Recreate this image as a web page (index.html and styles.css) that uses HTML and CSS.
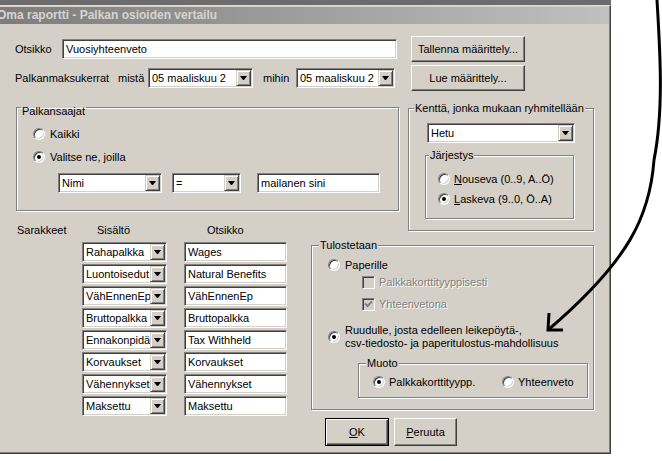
FILE: index.html
```html
<!DOCTYPE html>
<html lang="fi">
<head>
<meta charset="utf-8">
<title>Oma raportti - Palkan osioiden vertailu</title>
<link rel="stylesheet" href="styles.css">
</head>
<body>
<div class="screen">
  <div class="topstrip"></div>
  <div class="window">
    <div class="titlebar">Oma raportti - Palkan osioiden vertailu</div>
    <div class="client">
      <div class="top">
        <div class="field-row">
          <span class="lbl lbl-otsikko">Otsikko</span>
          <div class="input w-otsikko">Vuosiyhteenveto</div>
        </div>
        <div class="btn">Tallenna määrittely...</div>
        <div class="field-row">
          <span class="lbl lbl-kerrat">Palkanmaksukerrat</span>
          <span class="lbl lbl-mista">mistä</span>
          <div class="select w-date1"><span class="val">05 maaliskuu 2</span><span class="arrow"></span></div>
          <span class="lbl lbl-mihin">mihin</span>
          <div class="select w-date2"><span class="val">05 maaliskuu 2</span><span class="arrow"></span></div>
        </div>
        <div class="btn">Lue määrittely...</div>
      </div>

      <div class="mid">
        <fieldset class="group g-saajat">
          <legend>Palkansaajat</legend>
          <div class="opt"><span class="radio"></span><span>Kaikki</span></div>
          <div class="opt opt-valitse"><span class="radio on"></span><span>Valitse ne, joilla</span></div>
          <div class="filter">
            <div class="select w-nimi"><span class="val">Nimi</span><span class="arrow"></span></div>
            <div class="select w-eq"><span class="val">=</span><span class="arrow"></span></div>
            <div class="input w-haku">mailanen sini</div>
          </div>
        </fieldset>
        <fieldset class="group g-kentta">
          <legend>Kenttä, jonka mukaan ryhmitellään</legend>
          <div class="select w-hetu"><span class="val">Hetu</span><span class="arrow"></span></div>
          <fieldset class="group g-jarj">
            <legend>Järjestys</legend>
            <div class="opt opt-narrow"><span class="radio"></span><span><u>N</u>ouseva (0..9, A..Ö)</span></div>
            <div class="opt opt-narrow opt-laskeva"><span class="radio on"></span><span><u>L</u>askeva (9..0, Ö..A)</span></div>
          </fieldset>
        </fieldset>
      </div>

      <div class="bottom">
        <div class="columns">
          <div class="col-head c1">Sarakkeet</div>
          <div class="col-head c2 h-sis">Sisältö</div>
          <div class="col-head c3 h-ots">Otsikko</div>

          <div class="select c2"><span class="val">Rahapalkka</span><span class="arrow"></span></div>
          <div class="input c3">Wages</div>
          <div class="select c2"><span class="val">Luontoisedut</span><span class="arrow"></span></div>
          <div class="input c3">Natural Benefits</div>
          <div class="select c2"><span class="val">VähEnnenEp</span><span class="arrow"></span></div>
          <div class="input c3">VähEnnenEp</div>
          <div class="select c2"><span class="val">Bruttopalkka</span><span class="arrow"></span></div>
          <div class="input c3">Bruttopalkka</div>
          <div class="select c2"><span class="val">Ennakonpidä</span><span class="arrow"></span></div>
          <div class="input c3">Tax Withheld</div>
          <div class="select c2"><span class="val">Korvaukset</span><span class="arrow"></span></div>
          <div class="input c3">Korvaukset</div>
          <div class="select c2"><span class="val">Vähennykset</span><span class="arrow"></span></div>
          <div class="input c3">Vähennykset</div>
          <div class="select c2"><span class="val">Maksettu</span><span class="arrow"></span></div>
          <div class="input c3">Maksettu</div>
        </div>

        <div class="output">
          <fieldset class="group g-tulos">
            <legend>Tulostetaan</legend>
            <div class="opt"><span class="radio"></span><span>Paperille</span></div>
            <div class="chk-row chk-1"><span class="check"></span><span class="disabled">Palkkakorttityyppisesti</span></div>
            <div class="chk-row chk-2"><span class="check"><svg class="tick" width="11" height="11" viewBox="0 0 11 11"><path d="M2 4.5 L4.5 7 L9 2.5" fill="none" stroke="#808080" stroke-width="2"/></svg></span><span class="disabled">Yhteenvetona</span></div>
            <div class="opt opt-ruutu"><span class="radio on"></span><span>Ruudulle, josta edelleen leikepöytä-,<br>csv-tiedosto- ja paperitulostus-mahdollisuus</span></div>
            <fieldset class="group g-muoto">
              <legend>Muoto</legend>
              <div class="muoto-row">
                <div class="opt opt-narrow o-palkka"><span class="radio on"></span><span>Palkkakorttityypp.</span></div>
                <div class="opt opt-narrow"><span class="radio"></span><span>Yhteenveto</span></div>
              </div>
            </fieldset>
          </fieldset>
          <div class="actions">
            <div class="btn btn-ok"><span><u>O</u>K</span></div>
            <div class="btn btn-cancel"><span><u>P</u>eruuta</span></div>
          </div>
        </div>
      </div>
    </div>
  </div>

  <svg class="annotation" width="662" height="461" viewBox="0 0 662 461">
    <path d="M657,0 C660,50 664,110 654,160 C650,215 630,260 548,330" fill="none" stroke="#000" stroke-width="3"/>
    <path d="M549,313 L548,330 L563,330" fill="none" stroke="#000" stroke-width="3"/>
  </svg>
</div>
</body>
</html>
```

FILE: styles.css
```css
* { box-sizing: border-box; }

html, body {
  margin: 0;
  padding: 0;
  background: #fff;
}

body {
  font-family: "Liberation Sans", Arial, sans-serif;
  font-size: 11px;
  line-height: 13px;
  color: #000;
}

.screen {
  position: relative;
  width: 662px;
  height: 461px;
  overflow: hidden;
  background: #fff;
}

.topstrip {
  width: 611px;
  height: 5px;
  background: #6c6c6c;
}

.window {
  width: 611px;
  height: 449px;
  background: #d4d0c8;
  border-top: 1px solid #dedbd5;
  border-right: 1px solid #404040;
  border-bottom: 1px solid #404040;
  box-shadow: inset -1px -1px #808080;
  padding: 1px 1px 1px 0;
  display: flex;
  flex-direction: column;
}

.titlebar {
  height: 17px;
  background: linear-gradient(to right, #7c7c7c, #c0c0c0);
  color: #d8d5cf;
  font-weight: bold;
  font-size: 12px;
  line-height: 17px;
  text-indent: -3px;
  white-space: nowrap;
  overflow: hidden;
}

.client {
  flex: 1;
  padding: 12px 0 0 15px;
}

/* ---------- generic controls ---------- */

.lbl { white-space: nowrap; }

.input {
  height: 20px;
  background: #fff;
  border: 1px solid;
  border-color: #808080 #fff #fff #808080;
  box-shadow: inset 1px 1px #404040, inset -1px -1px #d4d0c8;
  padding: 0 3px;
  line-height: 18px;
  white-space: nowrap;
  overflow: hidden;
}

.select {
  height: 20px;
  display: flex;
  background: #fff;
  border: 1px solid;
  border-color: #808080 #fff #fff #808080;
  box-shadow: inset 1px 1px #404040, inset -1px -1px #d4d0c8;
  padding: 1px;
}

.select .val {
  flex: 1;
  min-width: 0;
  padding-left: 2px;
  line-height: 16px;
  white-space: nowrap;
  overflow: hidden;
}

.select .arrow {
  flex: none;
  width: 15px;
  height: 16px;
  background: #d4d0c8;
  border: 1px solid;
  border-color: #d4d0c8 #404040 #404040 #d4d0c8;
  box-shadow: inset 1px 1px #fff, inset -1px -1px #808080;
  display: flex;
  align-items: center;
  justify-content: center;
}

.select .arrow::after {
  content: "";
  width: 1px;
  height: 0;
  border-top: 4px solid #000;
  border-left: 3px solid transparent;
  border-right: 3px solid transparent;
  box-sizing: content-box;
}

.btn {
  height: 26px;
  background: #d4d0c8;
  border: 1px solid;
  border-color: #fff #404040 #404040 #fff;
  box-shadow: inset -1px -1px #808080;
  display: flex;
  align-items: center;
  justify-content: center;
  white-space: nowrap;
}

.btn-ok {
  border: 1px solid #000;
  box-shadow: inset 1px 1px #fff, inset -1px -1px #404040, inset -2px -2px #808080;
}

.opt {
  display: flex;
  align-items: center;
  height: 16px;
  gap: 5px;
  white-space: nowrap;
}

.opt-narrow { gap: 4px; }

.radio {
  position: relative;
  flex: none;
  width: 12px;
  height: 12px;
  border-radius: 50%;
  background: #fff;
  border: 1px solid;
  border-color: #808080 #fff #fff #808080;
  box-shadow: inset 1px 1px #404040, inset -1px -1px #d4d0c8;
}

.radio.on::after {
  content: "";
  position: absolute;
  left: 3px;
  top: 3px;
  width: 4px;
  height: 4px;
  border-radius: 50%;
  background: #000;
}

.check {
  flex: none;
  width: 13px;
  height: 13px;
  background: #d4d0c8;
  border: 1px solid;
  border-color: #808080 #fff #fff #808080;
  box-shadow: inset 1px 1px #404040, inset -1px -1px #d4d0c8;
  display: flex;
}

.tick { display: block; }

.disabled {
  color: #808080;
  text-shadow: 1px 1px 0 #fff;
}

.group {
  margin: 0;
  min-width: 0;
  border: 1px solid #808080;
  box-shadow: inset 1px 1px #fff, 1px 1px #fff;
}

.group > legend {
  padding: 0 1px;
  height: 13px;
  line-height: 13px;
  background: #d4d0c8;
  white-space: nowrap;
}

/* ---------- top rows ---------- */

.top {
  display: grid;
  grid-template-columns: 396px 114px;
  grid-auto-rows: 26px;
  row-gap: 3px;
}

.field-row {
  display: flex;
  align-items: center;
}

.lbl-otsikko { width: 47px; }
.w-otsikko { width: 335px; }
.lbl-kerrat { width: 103px; }
.lbl-mista { width: 30px; }
.w-date1 { width: 105px; }
.lbl-mihin { width: 33px; margin-left: 10px; }
.w-date2 { width: 99px; }

/* ---------- middle groups ---------- */

.mid {
  display: flex;
  align-items: flex-start;
  margin-top: 6px;
}

.g-saajat {
  width: 383px;
  margin-left: 1px;
  padding: 8px 0 17px 16px;
}
.g-saajat > legend {
  margin-left: -12px;
  height: 21px;
  padding-top: 8px;
  background: transparent;
}

.opt-valitse { margin-top: 7px; }

.filter {
  display: flex;
  margin: 8px 0 0 25px;
}
.w-nimi { width: 104px; }
.w-eq { width: 69px; margin-left: 10px; }
.w-haku { width: 123px; margin-left: 16px; }

.g-kentta {
  width: 186px;
  margin: 5px 0 -7px 9px;
  padding: 8px 0 11px 16px;
}
.g-kentta > legend { margin-left: -11px; }

.w-hetu { width: 148px; margin-left: 2px; }

.g-jarj {
  width: 149px;
  margin-top: 6px;
  padding: 9px 0 11px 12px;
}
.g-jarj > legend { margin-left: -9px; }

.opt-laskeva { margin-top: 4px; }

/* ---------- bottom ---------- */

.bottom {
  display: flex;
  align-items: flex-start;
}

.columns {
  width: 270px;
  margin-left: 2px;
  display: grid;
  grid-template-columns: 65px 102px 103px;
  grid-template-rows: 16px;
  grid-auto-rows: 20px;
  row-gap: 2px;
}

.c1 { grid-column: 1; }
.c2 { grid-column: 2; }
.c3 { grid-column: 3; }

.col-head { white-space: nowrap; grid-row: 1; }
.h-sis { padding-left: 15px; }
.h-ots { padding-left: 23px; }

.columns .select { width: 85px; }
.columns .input { width: 103px; }

.output {
  margin: 15px 0 0 24px;
  display: flex;
  flex-direction: column;
}

.g-tulos {
  width: 283px;
  padding: 5px 0 11px 16px;
}
.g-tulos > legend { margin-left: -9px; }

.chk-row {
  display: flex;
  align-items: center;
  gap: 4px;
  height: 16px;
  margin-left: 34px;
  white-space: nowrap;
}
.chk-1 { margin-top: 1px; }
.chk-2 { margin-top: 6px; }

.opt-ruutu {
  height: 26px;
  margin-top: 12px;
}

.g-muoto {
  width: 230px;
  margin: 7px 0 0 30px;
  padding: 4px 0 7px 14px;
}
.g-muoto > legend { margin-left: -7px; }

.muoto-row { display: flex; }
.o-palkka { width: 129px; }

.actions {
  display: flex;
  gap: 5px;
  margin: 8px 0 0 14px;
}
.btn-ok { width: 64px; height: 28px; }
.btn-cancel { width: 63px; height: 28px; }

.annotation {
  position: absolute;
  left: 0;
  top: 0;
  pointer-events: none;
}
```
